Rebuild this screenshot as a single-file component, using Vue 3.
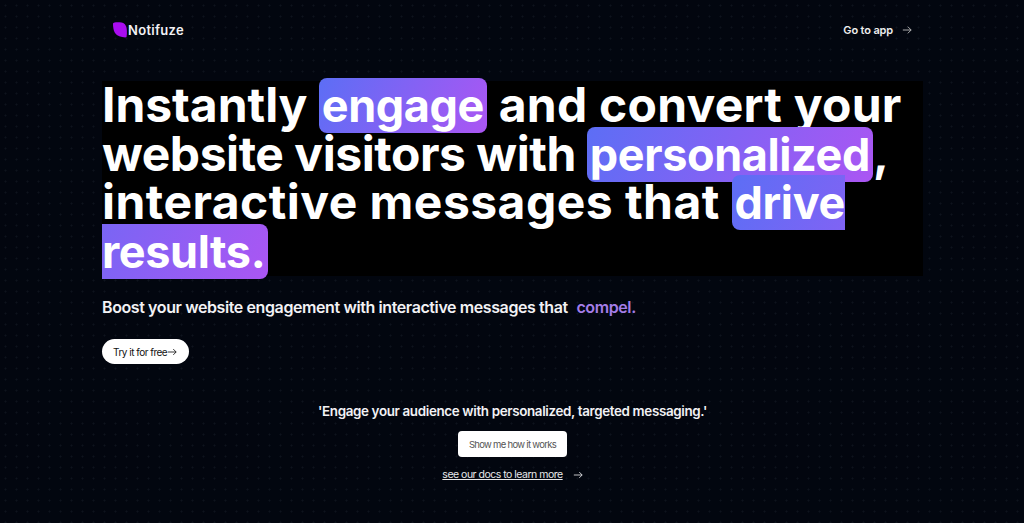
<script setup>
const quote = "'Engage your audience with personalized, targeted messaging.'";
</script>

<template>
  <div class="page">
    <header class="nav">
      <a class="brand">
        <svg class="logo" viewBox="0 0 16 16" width="16" height="16">
          <path d="M1 2 C1 1 1.6 0.6 2.6 0.5 C6 0.2 10.5 0.3 12.6 2 C15 4 15.3 10 14.6 14.6 C14.5 15.2 14 15.4 13.4 15.4 C9 15.3 5 14 3 11 C1.5 8.5 1 5 1 2 Z" fill="#a90df0" />
        </svg>
        <span>Notifuze</span>
      </a>
      <a class="go">
        <span>Go to app</span>
        <svg class="arrow" viewBox="0 0 12 12" width="10" height="10">
          <path d="M1 6H11M7 2 11 6 7 10" fill="none" stroke="currentColor" stroke-width="1.1" />
        </svg>
      </a>
    </header>

    <main class="hero">
      <h1 class="headline"><span class="t1">Instantly </span><span class="hl">engage</span><span class="t2"> and convert your </span><span class="t3">website visitors with </span><span class="hl">personalized</span>, <span class="t4">interactive messages that </span><span class="hl">drive results.</span></h1>
      <p class="sub">Boost your website engagement with interactive messages that <span class="compel">compel.</span></p>
      <button class="try">Try it for free
        <svg viewBox="0 0 12 12" width="10" height="10">
          <path d="M1 6H11M7.5 2.5 11 6 7.5 9.5" fill="none" stroke="currentColor" stroke-width="1" />
        </svg>
      </button>
    </main>

    <section class="cta">
      <p class="quote">{{ quote }}</p>
      <button class="show">Show me how it works</button>
      <div class="docs">
        <a>see our docs to learn more</a>
        <svg viewBox="0 0 12 12" width="10" height="10">
          <path d="M1 6H11M7.5 2.5 11 6 7.5 9.5" fill="none" stroke="currentColor" stroke-width="1" />
        </svg>
      </div>
    </section>
  </div>
</template>

<style>
html, body { margin: 0; background: #02060f; }
</style>

<style scoped>
.page {
  width: 1024px;
  height: 523px;
  overflow: hidden;
  box-sizing: border-box;
  background-color: #02060f;
  background-image: radial-gradient(circle, #0e131d 0.9px, transparent 1.1px);
  background-size: 11px 11px;
  color: #fff;
  font-family: Inter, "Liberation Sans", sans-serif;
  padding-top: 22px;
}
.nav {
  display: flex;
  justify-content: space-between;
  align-items: center;
  height: 16px;
  padding: 0 112px 0 112px;
}
.brand {
  display: flex;
  align-items: center;
  font-size: 13px;
  font-weight: 600;
  color: #f2f2f5;
}
.logo { display: block; }
.brand span { letter-spacing: 0.3px; }
.go {
  display: flex;
  align-items: center;
  gap: 9px;
  font-size: 11px;
  font-weight: 600;
  letter-spacing: -0.15px;
  color: #eee;
}
.arrow { display: block; color: #bbb; }
.hero {
  padding: 0 101px 0 102px;
  margin-top: 43px;
}
.headline {
  margin: 0;
  background: #000;
  font-size: 48px;
  line-height: 47.7px;
  font-weight: 700;
  height: 195px;
}
.t1 { letter-spacing: -0.05px; }
.t2 { letter-spacing: 0.25px; }
.t3 { letter-spacing: -0.45px; }
.t4 { letter-spacing: 0.46px; }
.hl {
  background: linear-gradient(115deg, #5c6ef5, #ab56f3);
  border-radius: 8px;
  padding: 0 3px;
  font-size: 45px;
  letter-spacing: -0.4px;
  -webkit-box-decoration-break: slice;
  box-decoration-break: slice;
}
.sub {
  margin: 19px 0 0;
  font-size: 16px;
  line-height: 24px;
  font-weight: 600;
  letter-spacing: -0.4px;
  color: #f2f2f5;
}
.compel { color: #a47de8; margin-left: 5px; }
.try {
  display: flex;
  align-items: center;
  margin-top: 20px;
  height: 25px;
  width: 87px;
  box-sizing: border-box;
  padding: 0 0 0 11px;
  border: 0;
  border-radius: 13px;
  background: #fff;
  color: #111;
  font-size: 10px;
  letter-spacing: -0.5px;
  font-family: Inter, sans-serif;
}
.cta {
  margin-top: 37px;
  display: flex;
  flex-direction: column;
  align-items: center;
  padding-left: 1px;
}
.quote {
  margin: 0;
  font-size: 13.4px;
  line-height: 20px;
  font-weight: 600;
  letter-spacing: -0.35px;
  color: #f2f2f5;
}
.show {
  margin-top: 10px;
  width: 109px;
  height: 26px;
  border: 0;
  border-radius: 4px;
  background: #fff;
  color: #555;
  font-size: 9.5px;
  letter-spacing: -0.7px;
  font-family: Inter, sans-serif;
  padding: 0;
}
.docs {
  display: flex;
  align-items: center;
  gap: 10px;
  margin-top: 11px;
  font-size: 10.5px;
  letter-spacing: -0.5px;
  color: #e8e8ea;
}
.docs a { text-decoration: underline; }
</style>
